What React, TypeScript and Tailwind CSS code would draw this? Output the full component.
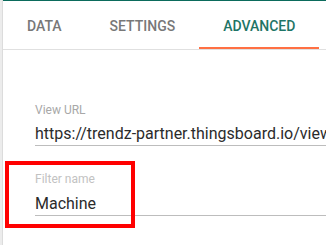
import React from "react";

export default function App() {
  const font = { fontFamily: "Roboto, 'Noto Sans', Arial, sans-serif" };
  return (
    <div className="relative w-[326px] h-[245px] bg-white flex overflow-hidden" style={font}>
      <div className="w-[3px] h-full bg-[#ececec] border-r border-[#dcdcdc] flex-none" />
      <div className="flex-1 flex flex-col min-w-0">
        <div className="h-px bg-[#0b6b5c] flex-none" />
        <div className="flex h-[49px] border-b border-[#e0e0e0] flex-none">
          <div className="px-6 pt-[3px] flex items-center text-[14px] font-medium text-[#787878]">DATA</div>
          <div className="px-6 pt-[3px] flex items-center text-[14px] font-medium text-[#787878]">SETTINGS</div>
          <div className="px-6 pt-[5px] flex items-center text-[14px] font-medium text-[#1f7566] border-b-2 border-[#ff7043]">ADVANCED</div>
        </div>
        <div className="pl-8 pt-[53px] flex flex-col">
          <div className="text-[12px] leading-[14px] text-[#a8a8a8]">View URL</div>
          <div className="mt-[7px] text-[16px] leading-[20px] text-[#2b2b2b] whitespace-nowrap border-b border-[#bdbdbd] pb-[1px]">
            https://trendz-partner.thingsboard.io/viewer
          </div>
          <div className="mt-[26px] text-[12px] leading-[14px] text-[#c2c2c2]">Filter name</div>
          <div className="mt-[8px] text-[16px] leading-[20px] text-[#2b2b2b] border-b border-[#bdbdbd] pb-[1px]">Machine</div>
        </div>
      </div>
      <div className="absolute left-[5px] top-[161px] w-[130px] h-[67px] border-4 border-[#ff0000]" />
    </div>
  );
}
